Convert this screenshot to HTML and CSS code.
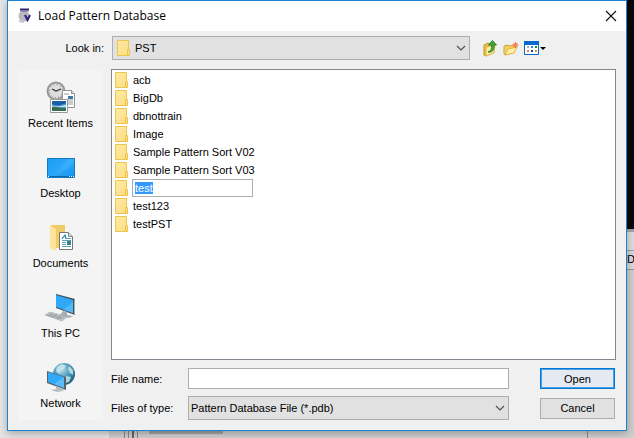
FILE: index.html
```html
<!DOCTYPE html>
<html lang="en">
<head>
<meta charset="utf-8">
<title>Load Pattern Database</title>
<link rel="stylesheet" href="styles.css">
</head>
<body>
<svg class="defs" aria-hidden="true">
  <defs>
    <linearGradient id="fold" x1="0" y1="0" x2="1" y2="1"><stop offset="0" stop-color="#ffeba6"/><stop offset="1" stop-color="#fbdc80"/></linearGradient>
    <linearGradient id="screen" x1="0" y1="0" x2="1" y2="1"><stop offset="0" stop-color="#1b9cf5"/><stop offset=".5" stop-color="#2ba7fb"/><stop offset="1" stop-color="#1792ea"/></linearGradient>
    <radialGradient id="globe" cx=".4" cy=".3" r=".7"><stop offset="0" stop-color="#b5dceb"/><stop offset=".5" stop-color="#4f9fbe"/><stop offset="1" stop-color="#1d607f"/></radialGradient>
    <symbol id="folder" viewBox="0 0 13 16">
      <path d="M.5.5h11v9h1v6H.5z" fill="url(#fold)" stroke="#ecc54e"/>
      <path d="M10.500 15v-5.500h1" fill="none" stroke="#ecc54e"/>
    </symbol>
  </defs>
</svg>
<div class="backdrop" aria-hidden="true">
  <div class="side"><div class="black"></div><div class="band"></div><div class="tab">D</div></div>
  <div class="under"><i class="line"></i><i class="line"></i><i class="line dark"></i><i class="line"></i><i class="bar"></i><i class="line far"></i></div>
</div>
<main class="dialog">
  <header class="titlebar">
    <svg class="app-icon" width="14" height="16" viewBox="0 0 14 16"><circle cx="6" cy="8" r="5.500" fill="#b9b9be"/><path d="M2 3h9M1 13l5 1" stroke="#c9c9cd" stroke-width="2"/><path d="M2 1.500h9" stroke="#392374" stroke-width="2"/><path d="M3 3.500h6" stroke="#8e84ad"/><path d="M7 7l2.500 5L12 7" fill="none" stroke="#301881" stroke-width="2"/></svg>
    <h1>Load Pattern Database</h1>
    <button class="close" aria-label="Close"><svg width="12" height="12" viewBox="0 0 12 12"><path d="M1 1l10 10M11 1L1 11" stroke="#111" stroke-width="1.100"/></svg></button>
  </header>
  <div class="lookin">
    <label for="dir">Look in:</label>
    <div class="combo dir">
      <svg class="combo-icon" width="13" height="16"><use href="#folder"/></svg>
      <select id="dir"><option>PST</option></select>
      <svg class="arrow" width="10" height="6" viewBox="0 0 10 6"><path d="M1 1l4 4 4-4" fill="none" stroke="#505050" stroke-width="1.200"/></svg>
    </div>
    <div class="tools">
      <button aria-label="Up one level"><svg width="15" height="17" viewBox="0 0 15 17"><path d="M1 5l4-2 2 1 4-1v9l-8 4-2-1z" fill="#e9bd43" stroke="#c6952a"/><path d="M3 7l9-2-1 8-8 3z" fill="#fdf0a0" stroke="#dfb547"/><path d="M5 12c3-1 4-3 3.500-7H5.500l4-4.500 4 4.500H11c.5 5-2 8-6 7z" fill="#43a936" stroke="#21732a" stroke-width=".8"/></svg></button>
      <button aria-label="New folder"><svg width="16" height="15" viewBox="0 0 16 15"><path d="M1 5l4-1 1 1 5-1v7l-9 3-1-1z" fill="#f2cf66" stroke="#d5a43d"/><path d="M2 14l3-6 9-2-3 6z" fill="#fff1a4" stroke="#dfb34b"/><path d="M12.500 1v6M9.500 4h6M10.500 2l4 4M14.500 2l-4 4" stroke="#e86b40"/><circle cx="12.500" cy="4" r="1.500" fill="#ff8253"/></svg></button>
      <button aria-label="View menu"><svg width="22" height="14" viewBox="0 0 22 14"><path d="M.5.500h14v13H.5z" fill="#fff" stroke="#0868cd"/><path d="M0 0h15v4H0z" fill="#0868cd"/><path d="M3 5h2v2H3z" fill="#aab2c8"/><path d="M7 5h2v2H7z" fill="#168ae8"/><path d="M11 5h2v2h-2z" fill="#178b25"/><path d="M3 9h2v2H3z" fill="#ff7656"/><path d="M7 9h2v2H7z" fill="#143d9e"/><path d="M11 9h2v2h-2z" fill="#cda129"/><path d="M16 6h6l-3 3z" fill="#000"/></svg></button>
    </div>
  </div>
  <div class="content">
    <nav class="places">
      <button><svg width="30" height="32" viewBox="0 0 30 32"><circle cx="10" cy="10" r="8.500" fill="#dedede" stroke="#989898" stroke-width="2"/><circle cx="10" cy="10" r="6.500" fill="none" stroke="#777" stroke-dasharray="1 2.400"/><path d="M6 8l4 2 5-2" fill="none" stroke="#333" stroke-width="1.200"/><path d="M16.500 9.500h9l3 3v14h-12z" fill="#fff" stroke="#929292"/><path d="M25.500 9.500v3h3" fill="#ddd" stroke="#929292"/><path d="M18 13h5M18 19h9M18 21h9M18 23h9" stroke="#9a9a9a"/><path d="M22 15h5v3h-5z" fill="#3c7aa5"/><path d="M4.500 18.500h17v13h-17z" fill="#fff" stroke="#999"/><path d="M6 20h14v10H6z" fill="#4e9bcf"/><path d="M6 20h14v2c-5 3-10 3-14 1z" fill="#1b5da6"/><path d="M6 25c4 0 6 1 14-1v2H6z" fill="#c4e4ec"/><path d="M6 26c6-1 8 2 14 1v3H6z" fill="#386b50"/></svg><span>Recent Items</span></button>
      <button><svg width="30" height="32" viewBox="0 0 30 32"><path d="M1.500 7.500h27v19h-27z" fill="url(#screen)" stroke="#1179c2"/><path d="M8 26L22 8h6v5z" fill="#54b9fc" opacity=".35"/><path d="M2 25.500h26" stroke="#096bb0"/><path d="M2 25.500h1M23 25.500h1M25 25.500h1M27 25.500h1" stroke="#fff"/></svg><span>Desktop</span></button>
      <button><svg width="30" height="32" viewBox="0 0 30 32"><path d="M5 4h14v23H5z" fill="#efcb6a"/><path d="M4 4l6 4v22l-6-3z" fill="#ffe49a"/><path d="M13.500 11.500h9l4 4v13h-13z" fill="#fff" stroke="#777"/><path d="M22.500 11.500v4h4" fill="#ddd" stroke="#888"/><path d="M16 18l3-4 1 4" fill="none" stroke="#2282b5" stroke-width="1.200"/><path d="M20 17.500h5M16 19.500h9M16 21.500h4M16 23.500h4M16 25.500h9" stroke="#58a0bf"/><path d="M21 20h4v4h-4z" fill="#3e7e80"/></svg><span>Documents</span></button>
      <button><svg width="32" height="32" viewBox="0 0 32 32"><path d="M11 3l19 5v16L11 17z" fill="#454f57"/><path d="M11 4l17 5v13l-17-6z" fill="#2ea8f7"/><path d="M18 19l10-8v11z" fill="#74c8fc" opacity=".5"/><path d="M29 8l1 1v14l-1 1z" fill="#a5b2b8"/><path d="M18 20l4 1v3l6 1-4 2-9-3z" fill="#a6b0b5"/><path d="M5 21l17 5-5 4L0 24z" fill="#c5c9cb" stroke="#92999c" stroke-width=".5"/><path d="M4 23l15 4M2 24l15 4M8 22l-4 3M12 23l-4 3M16 25l-4 3" stroke="#8d9598" stroke-width=".7"/></svg><span>This PC</span></button>
      <button><svg width="32" height="32" viewBox="0 0 32 32"><circle cx="19" cy="13" r="11" fill="url(#globe)"/><path d="M12 6l5-3 4 2-2 3-3 1-1 4-4-3zM24 5l4 4v5l-3-2-2-4zM21 15l5 1-2 5-4 1z" fill="#d3e8ea" opacity=".8"/><path d="M2 10l19 6v13L2 22z" fill="#53616c"/><path d="M3 11l16 5v11L3 21z" fill="#30a9f7"/><path d="M9 23l10-7v11z" fill="#81d0fe" opacity=".5"/><path d="M11 25l5 2 3 1-1 2-6 1-6-2 5-1z" fill="#b7c0c4"/></svg><span>Network</span></button>
    </nav>
    <section class="main">
      <ul class="files">
        <li><svg width="13" height="16"><use href="#folder"/></svg><span>acb</span></li>
        <li><svg width="13" height="16"><use href="#folder"/></svg><span>BigDb</span></li>
        <li><svg width="13" height="16"><use href="#folder"/></svg><span>dbnottrain</span></li>
        <li><svg width="13" height="16"><use href="#folder"/></svg><span>Image</span></li>
        <li><svg width="13" height="16"><use href="#folder"/></svg><span>Sample Pattern Sort V02</span></li>
        <li><svg width="13" height="16"><use href="#folder"/></svg><span>Sample Pattern Sort V03</span></li>
        <li><svg width="13" height="16"><use href="#folder"/></svg><input class="rename" aria-label="Folder name" value="test"></li>
        <li><svg width="13" height="16"><use href="#folder"/></svg><span>test123</span></li>
        <li><svg width="13" height="16"><use href="#folder"/></svg><span>testPST</span></li>
      </ul>
      <form class="fields">
        <label for="name">File name:</label>
        <input id="name" class="name">
        <button type="button" class="btn primary">Open</button>
        <label for="type">Files of type:</label>
        <div class="combo type">
          <select id="type"><option>Pattern Database File (*.pdb)</option></select>
          <svg class="arrow" width="10" height="6" viewBox="0 0 10 6"><path d="M1 1l4 4 4-4" fill="none" stroke="#505050" stroke-width="1.200"/></svg>
        </div>
        <button type="button" class="btn">Cancel</button>
      </form>
    </section>
  </div>
</main>
<script src="rename.js"></script>
</body>
</html>
```
FILE: styles.css
```css
* { box-sizing: border-box; }
body {
  margin: 0;
  min-height: 100vh;
  display: flex;
  padding: 0 7px 7px;
  position: relative;
  background: #e6e6e6;
  font: 11px/16px "Liberation Sans", Arial, sans-serif;
  color: #000;
}
button, input, select { font: inherit; color: inherit; }
button { border: 0; padding: 0; background: none; }
svg { display: block; flex: none; }
.defs { position: absolute; width: 0; height: 0; }

.backdrop { position: absolute; inset: 0; overflow: hidden; }
.side { position: absolute; top: 0; right: 0; bottom: 0; width: 8px; background: #cfcfcf; }
.black { height: 229px; background: #080808; }
.band { height: 22px; background: #dedede; border-top: 3px solid #a5a5ab; border-bottom: 1px solid #a0a0a0; }
.tab { height: 19px; padding-left: 1px; background: #d8d8d8; border-bottom: 1px solid #999; }
.under { position: absolute; left: 0; right: 0; bottom: 0; height: 8px; display: flex; gap: 3px; padding-left: 109px; background: linear-gradient(90deg, #e4e4e4 109px, #cfcfcf 109px); }
.line { width: 1px; background: #8c8c8c; }
.line:first-child { margin-left: 15px; }
.line.dark { width: 2px; background: #666; }
.bar { width: 74px; height: 3px; margin: 1px 0 0 8px; background: #a5a5a5; }
.line.far { margin-left: auto; margin-right: 46px; }

.dialog {
  position: relative;
  flex: 1;
  display: flex;
  flex-direction: column;
  background: #f0f0f0;
  border: 1px solid #1883d7;
  box-shadow: 0 2px 8px rgba(0, 0, 0, .3);
}
.titlebar { display: flex; align-items: center; gap: 6px; height: 30px; padding: 0 9px 0 10px; background: #fff; }
.titlebar h1 { flex: 1; margin: 0; font: 12px/16px "Open Sans", "Noto Sans", sans-serif; }
.lookin { display: flex; align-items: center; height: 34px; padding: 0 80px 0 10px; }
.lookin label { width: 94px; padding-right: 8px; text-align: right; }
.combo { position: relative; display: flex; align-items: center; }
.combo select {
  appearance: none;
  width: 100%;
  height: 24px;
  padding: 0 20px 0 2px;
  border: 1px solid #adadad;
  border-radius: 0;
  background: #e1e1e1;
}
.combo.dir { flex: 1; }
.combo.dir select { padding-left: 22px; }
.combo-icon { position: absolute; left: 5px; }
.arrow { position: absolute; right: 4px; }
.tools { display: flex; align-items: center; gap: 5px; margin-left: 13px; }

.content { flex: 1; display: flex; gap: 8px; padding: 4px 10px 10px; }
.places { width: 85px; display: flex; flex-direction: column; gap: 20px; padding-top: 12px; background: #f4f4f4; }
.places button { display: flex; flex-direction: column; align-items: center; gap: 2px; height: 50px; }
.main { flex: 1; display: flex; flex-direction: column; }
.files { flex: 1; margin: 0; padding: 1px 3px; list-style: none; background: #fff; border: 1px solid #828790; }
.files li { display: flex; align-items: center; gap: 5px; height: 18px; }
.rename { width: 121px; height: 18px; margin-left: -1px; padding: 0 2px; border: 1px solid #abadb3; outline: 0; }
.rename::selection { background: #3399ff; color: #fff; }
.fields { display: grid; grid-template-columns: 77px 1fr 75px; align-items: center; row-gap: 7px; margin: 8px 1px 0 0; }
.name { width: 100%; height: 21px; padding: 0 2px; border: 1px solid #abadb3; background: #fff; }
.btn { height: 21px; background: #e1e1e1; border: 1px solid #adadad; }
.btn.primary { background: #e5e9f1; border-color: #0078d7; box-shadow: inset 0 0 0 1px #4da1e3; }
.name, .combo.type { justify-self: start; width: calc(100% - 31px); }
```
FILE: rename.js
```js
const field = document.querySelector(".rename");
field.focus();
field.select();
```
